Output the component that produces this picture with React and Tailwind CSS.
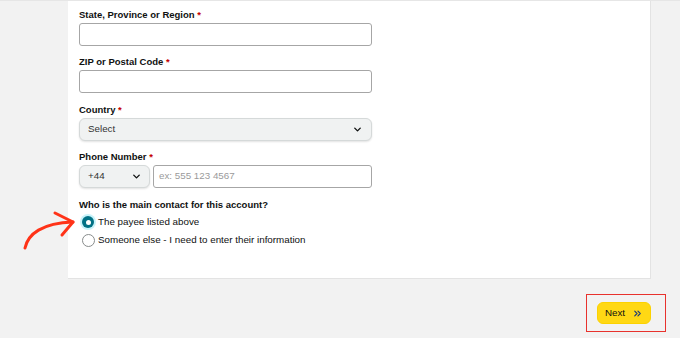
import React from 'react';
import { ChevronDown, ChevronsRight } from 'lucide-react';

function Label({ text }) {
    return (
        <div className="h-[14px] leading-[14px] mb-[1px] text-[9.5px] font-bold text-[#0f1111]">
            {text} <span className="text-[#c40000]">*</span>
        </div>
    );
}

function Radio({ checked, text }) {
    return (
        <div className="flex items-center h-[18px]">
            <div className="w-[18px] flex items-center justify-center">
                {checked ? (
                    <div className="w-[16px] h-[16px] rounded-full bg-[#c8f3fa] flex items-center justify-center">
                        <div className="w-[12px] h-[12px] rounded-full bg-[#007185] flex items-center justify-center">
                            <div className="w-[5px] h-[5px] rounded-full bg-white"></div>
                        </div>
                    </div>
                ) : (
                    <div className="w-[13px] h-[13px] rounded-full border border-[#888c8c] bg-white"></div>
                )}
            </div>
            <span className="ml-[1px] text-[9.8px] text-[#0f1111]">{text}</span>
        </div>
    );
}

export default function App() {
    return (
        <div className="relative w-[680px] h-[338px] bg-[#f2f2f2] overflow-hidden" style={{ fontFamily: '"Liberation Sans", Arial, sans-serif' }}>
            <div className="h-[1px] bg-[#e6e6e6]"></div>

            {/* Form card */}
            <div className="ml-[68px] w-[583px] h-[278px] bg-white border-r border-b border-[#e3e3e3] px-[11px] pt-[7px]">
                <div className="w-[293px]">
                    <Label text="State, Province or Region" />
                    <div className="h-[23px] rounded-[3px] border border-[#a6a6a6] bg-white"></div>

                    <div className="mt-[9px]">
                        <Label text="ZIP or Postal Code" />
                        <div className="h-[23px] rounded-[3px] border border-[#a6a6a6] bg-white"></div>
                    </div>

                    <div className="mt-[10px]">
                        <Label text="Country" />
                        <div className="h-[23px] rounded-[6px] border border-[#d5d9d9] bg-[#f0f2f2] shadow-[0_1px_2px_rgba(15,17,17,0.12)] flex items-center justify-between pl-[8px] pr-[8px]">
                            <span className="text-[9.8px] text-[#333]">Select</span>
                            <ChevronDown size={11} strokeWidth={3} className="text-[#0f1111]" />
                        </div>
                    </div>

                    <div className="mt-[9px]">
                        <Label text="Phone Number" />
                        <div className="flex gap-[3px]">
                            <div className="w-[71px] h-[23px] rounded-[6px] border border-[#d5d9d9] bg-[#f0f2f2] shadow-[0_1px_2px_rgba(15,17,17,0.12)] flex items-center justify-between pl-[8px] pr-[7px]">
                                <span className="text-[9.8px] text-[#333]">+44</span>
                                <ChevronDown size={11} strokeWidth={3} className="text-[#0f1111]" />
                            </div>
                            <div className="flex-1 h-[23px] rounded-[3px] border border-[#a6a6a6] bg-white flex items-center pl-[5px]">
                                <span className="text-[9.8px] text-[#9a9a9a]">ex: 555 123 4567</span>
                            </div>
                        </div>
                    </div>

                    <div className="mt-[10px] h-[14px] leading-[14px] text-[9.5px] font-bold text-[#0f1111]">
                        Who is the main contact for this account?
                    </div>
                    <div className="flex flex-col mt-[1px]">
                        <Radio checked text="The payee listed above" />
                        <Radio text="Someone else - I need to enter their information" />
                    </div>
                </div>
            </div>

            {/* Next button */}
            <div className="flex justify-end mt-[15px] mr-[14px]">
                <div className="border border-[#e8322d] pl-[10px] pr-[14px] pt-[7px] pb-[7px]">
                    <button className="w-[54px] h-[22px] rounded-[6px] bg-[#ffd814] border border-[#fcd200] flex items-center justify-center gap-[7px]">
                        <span className="text-[9.8px] text-[#0f1111]">Next</span>
                        <ChevronsRight size={11} strokeWidth={2.5} className="text-[#1c3a7a]" />
                    </button>
                </div>
            </div>

            {/* Annotation arrow */}
            <svg className="absolute left-[18px] top-[208px]" width="64" height="46" viewBox="0 0 64 46" fill="none">
                <path d="M7 40 C 10 26, 24 15, 55 14" stroke="#ff3318" strokeWidth="3" strokeLinecap="round" />
                <path d="M37 5 L55 14 L44 27" stroke="#ff3318" strokeWidth="3" strokeLinecap="round" strokeLinejoin="round" />
            </svg>
        </div>
    );
}
